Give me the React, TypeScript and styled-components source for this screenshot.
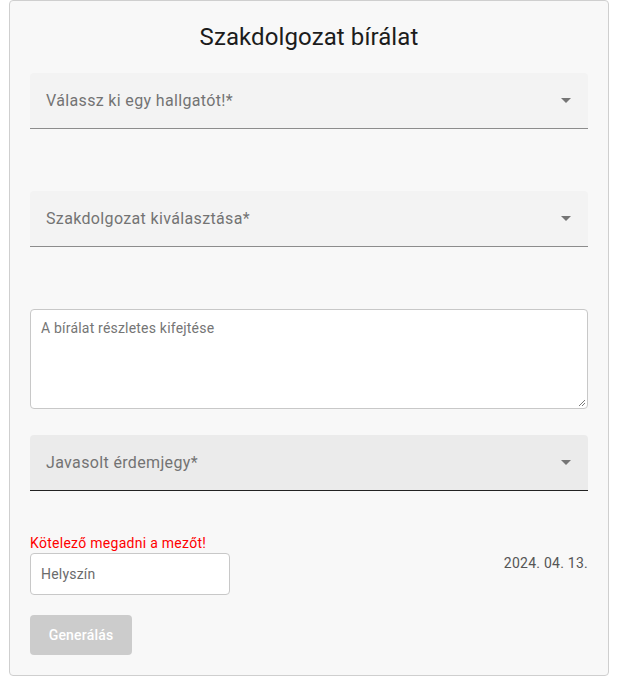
import React from "react";
import styled, { createGlobalStyle } from "styled-components";

const GlobalStyle = createGlobalStyle`
  html, body {
    margin: 0;
    padding: 0;
    background: #ffffff;
    font-family: Roboto, "Liberation Sans", Arial, sans-serif;
  }
  * { box-sizing: border-box; }
`;

const Page = styled.div`
  padding: 0 9px;
`;

const Card = styled.div`
  width: 600px;
  height: 676px;
  background: #f8f8f8;
  border: 1px solid #cfcfcf;
  border-radius: 4px;
  padding: 0 20px;
  display: flex;
  flex-direction: column;
`;

const Title = styled.h2`
  margin: 20px 0 0;
  font-size: 24px;
  line-height: 32px;
  font-weight: 400;
  color: #1c1c1c;
  text-align: center;
  letter-spacing: 0.1px;
`;

const SelectBox = styled.div<{ $active?: boolean; $mt: number }>`
  margin-top: ${(p) => p.$mt}px;
  height: 56px;
  background: ${(p) => (p.$active ? "#ebebeb" : "#f3f3f3")};
  border-radius: 4px 4px 0 0;
  border-bottom: 1px solid ${(p) => (p.$active ? "#222222" : "#8c8c8c")};
  display: flex;
  align-items: center;
  justify-content: space-between;
  padding: 0 16px 1px 16px;
`;

const SelectLabel = styled.span`
  font-size: 16px;
  letter-spacing: 0.35px;
  color: #737373;
`;

const Arrow = styled.svg`
  width: 24px;
  height: 24px;
  fill: #757575;
  margin-right: -6px;
`;

const TextArea = styled.div`
  margin-top: 62px;
  height: 100px;
  background: #ffffff;
  border: 1px solid #c8c8c8;
  border-radius: 4px;
  padding: 10px 10px;
  font-size: 14px;
  line-height: 16px;
  letter-spacing: 0.2px;
  color: #757575;
  position: relative;
`;

const Grip = styled.svg`
  position: absolute;
  right: 1px;
  bottom: 1px;
  width: 8px;
  height: 8px;
  stroke: #7a7a7a;
  stroke-width: 1;
`;

const BottomRow = styled.div`
  margin-top: 44px;
  display: flex;
  justify-content: space-between;
  align-items: flex-start;
`;

const LeftCol = styled.div`
  display: flex;
  flex-direction: column;
`;

const ErrorText = styled.div`
  font-size: 14px;
  line-height: 16px;
  letter-spacing: 0.28px;
  color: #ff0000;
  margin-bottom: 2px;
`;

const Input = styled.div`
  width: 200px;
  height: 42px;
  background: #ffffff;
  border: 1px solid #c8c8c8;
  border-radius: 4px;
  padding: 0 10px;
  display: flex;
  align-items: center;
  font-size: 14px;
  letter-spacing: 0.2px;
  color: #6b6b6b;
`;

const DateText = styled.div`
  margin-top: 20px;
  font-size: 14px;
  line-height: 16px;
  letter-spacing: 0.25px;
  color: #555555;
`;

const Button = styled.button`
  margin-top: 20px;
  width: 102px;
  height: 40px;
  border: none;
  border-radius: 4px;
  background: #cccccc;
  color: #ffffff;
  font-family: Roboto, "Liberation Sans", Arial, sans-serif;
  font-size: 14px;
  font-weight: 500;
  letter-spacing: 0.2px;
  align-self: flex-start;
  padding: 0;
`;

const Select = ({ label, active, mt }: { label: string; active?: boolean; mt: number }) => (
  <SelectBox $active={active} $mt={mt}>
    <SelectLabel>{label}</SelectLabel>
    <Arrow viewBox="0 0 24 24">
      <path d="M7 10l5 5 5-5z" />
    </Arrow>
  </SelectBox>
);

export default function App() {
  return (
    <>
      <GlobalStyle />
      <Page>
        <Card>
          <Title>Szakdolgozat bírálat</Title>
          <Select label="Válassz ki egy hallgatót!*" mt={20} />
          <Select label="Szakdolgozat kiválasztása*" mt={62} />
          <TextArea>
            A bírálat részletes kifejtése
            <Grip viewBox="0 0 8 8">
              <line x1="1" y1="7" x2="7" y2="1" />
              <line x1="4" y1="7" x2="7" y2="4" />
            </Grip>
          </TextArea>
          <Select label="Javasolt érdemjegy*" active mt={26} />
          <BottomRow>
            <LeftCol>
              <ErrorText>Kötelező megadni a mezőt!</ErrorText>
              <Input>Helyszín</Input>
            </LeftCol>
            <DateText>2024. 04. 13.</DateText>
          </BottomRow>
          <Button>Generálás</Button>
        </Card>
      </Page>
    </>
  );
}
